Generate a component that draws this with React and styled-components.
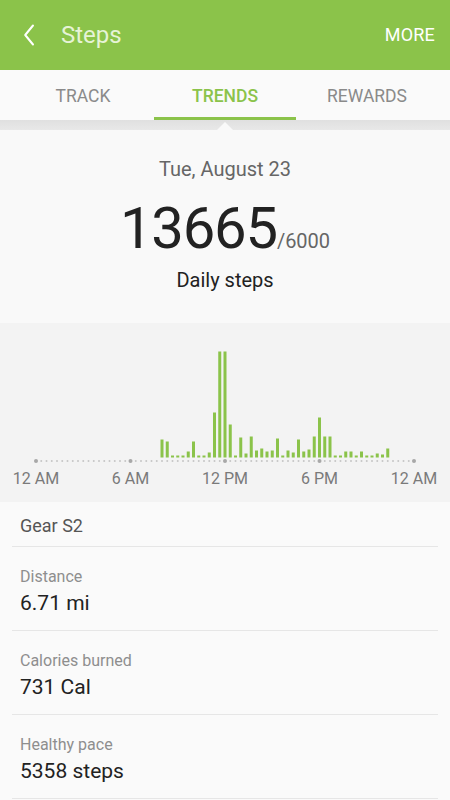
import React from "react";
import styled, { createGlobalStyle } from "styled-components";

const GREEN = "#8bc34a";

const GlobalStyle = createGlobalStyle`
  html, body { margin: 0; padding: 0; }
  body {
    background: #fafafa;
    font-family: Roboto, "Noto Sans", "Liberation Sans", sans-serif;
    overflow: hidden;
    width: 450px;
  }
  * { box-sizing: border-box; }
`;

const Page = styled.div`
  width: 450px;
  min-height: 800px;
  background: #fafafa;
  display: flex;
  flex-direction: column;
`;

const Header = styled.header`
  height: 70px;
  background: ${GREEN};
  display: flex;
  align-items: center;
  padding: 0 15px 0 23px;
`;

const BackButton = styled.button`
  background: none;
  border: 0;
  padding: 0;
  width: 12px;
  height: 22px;
  display: flex;
  cursor: pointer;
`;

const Title = styled.h1`
  margin: 0 0 0 26px;
  font-size: 24px;
  line-height: 28px;
  font-weight: 400;
  color: #e6f3d6;
  flex: 1;
`;

const More = styled.span`
  font-size: 18px;
  line-height: 22px;
  color: #ffffff;
  letter-spacing: 0.2px;
`;

const Tabs = styled.nav`
  display: grid;
  grid-template-columns: repeat(3, 142px);
  padding: 0 12px;
  background: #fafafa;
  height: 50px;
`;

const Tab = styled.div`
  padding-top: 16px;
  text-align: center;
  font-size: 17.5px;
  line-height: 20px;
  font-weight: ${(p) => (p.$active ? 500 : 400)};
  color: ${(p) => (p.$active ? GREEN : "#8a8a8a")};
  border-bottom: 3px solid ${(p) => (p.$active ? GREEN : "transparent")};
`;

const Band = styled.div`
  position: relative;
  height: 10px;
  background: linear-gradient(#e0e0e0, #e8e8e8);
  &::after {
    content: "";
    position: absolute;
    left: 50%;
    bottom: 0;
    margin-left: -8px;
    border-left: 8px solid transparent;
    border-right: 8px solid transparent;
    border-bottom: 8px solid #f9f9f9;
  }
`;

const Summary = styled.section`
  background: #f9f9f9;
  display: flex;
  flex-direction: column;
  align-items: center;
  padding: 27px 0 31px;
`;

const DateText = styled.div`
  font-size: 20px;
  line-height: 24px;
  color: #666;
`;

const Count = styled.div`
  margin-top: 15px;
  font-size: 58px;
  line-height: 64px;
  height: 64px;
  color: #222;
  letter-spacing: -1.2px;
`;

const Goal = styled.span`
  font-size: 20px;
  line-height: 20px;
  color: #666;
  letter-spacing: 0;
`;

const CountLabel = styled.div`
  margin-top: 8px;
  font-size: 20px;
  line-height: 24px;
  color: #222;
`;

const ChartPanel = styled.section`
  background: #f3f3f3;
  height: 179px;
  display: flex;
`;

const List = styled.section`
  background: #fafafa;
  padding: 0 12px;
  display: flex;
  flex-direction: column;
`;

const Device = styled.div`
  padding: 13px 8px 10px;
  font-size: 18px;
  line-height: 21px;
  color: #555;
  border-bottom: 1px solid #e6e6e6;
`;

const Stat = styled.div`
  padding: 20px 8px 14px;
  display: flex;
  flex-direction: column;
  gap: 3px;
  border-bottom: 1px solid #e6e6e6;
`;

const StatLabel = styled.div`
  font-size: 16px;
  line-height: 20px;
  color: #8e8e8e;
`;

const StatValue = styled.div`
  font-size: 21px;
  line-height: 26px;
  color: #222;
`;

const heights = {
  24: 18, 25: 16, 26: 2, 27: 2, 28: 2, 29: 6, 30: 16, 31: 2, 32: 2, 33: 5,
  34: 45, 35: 106, 36: 106, 37: 33, 38: 2, 39: 20, 40: 4, 41: 21, 42: 7,
  43: 9, 44: 6, 45: 7, 46: 19, 47: 2, 48: 7, 49: 5, 50: 18, 51: 6, 52: 8,
  53: 21, 54: 40, 55: 21, 56: 21, 57: 2, 58: 2, 59: 6, 60: 6, 61: 2, 62: 6,
  63: 2, 64: 2, 65: 4, 66: 3, 67: 9,
};

const X0 = 36;
const STEP = 5.25;
const BASE = 134.5;
const DOT_Y = 138;

function StepChart() {
  const dots = [];
  for (let i = 0; i <= 72; i++) {
    const major = i % 18 === 0;
    dots.push(
      <circle
        key={i}
        cx={X0 + i * STEP}
        cy={DOT_Y}
        r={major ? 2 : 1}
        fill={major ? "#a8a8a8" : "#c6c6c6"}
      />
    );
  }
  const bars = Object.entries(heights).map(([slot, h]) => (
    <rect
      key={slot}
      x={X0 + Number(slot) * STEP - 1.5}
      y={BASE - h}
      width={3}
      height={h}
      fill={GREEN}
    />
  ));
  const labels = ["12 AM", "6 AM", "12 PM", "6 PM", "12 AM"];
  return (
    <svg width="450" height="179" viewBox="0 0 450 179">
      {dots}
      {bars}
      {labels.map((l, i) => (
        <text
          key={i}
          x={X0 + i * 18 * STEP}
          y={160.5}
          textAnchor="middle"
          fontFamily="Roboto, sans-serif"
          fontSize="16"
          fill="#7a7a7a"
        >
          {l}
        </text>
      ))}
    </svg>
  );
}

export default function App() {
  return (
    <Page>
      <GlobalStyle />
      <Header>
        <BackButton aria-label="Back">
          <svg width="12" height="22" viewBox="0 0 12 22">
            <path d="M10 1.5 L2.2 11 L10 20.5" fill="none" stroke="#fff" strokeWidth="2" strokeLinecap="round" strokeLinejoin="round" />
          </svg>
        </BackButton>
        <Title>Steps</Title>
        <More>MORE</More>
      </Header>
      <Tabs>
        <Tab>TRACK</Tab>
        <Tab $active>TRENDS</Tab>
        <Tab>REWARDS</Tab>
      </Tabs>
      <Band />
      <Summary>
        <DateText>Tue, August 23</DateText>
        <Count>
          13665<Goal>/6000</Goal>
        </Count>
        <CountLabel>Daily steps</CountLabel>
      </Summary>
      <ChartPanel>
        <StepChart />
      </ChartPanel>
      <List>
        <Device>Gear S2</Device>
        <Stat>
          <StatLabel>Distance</StatLabel>
          <StatValue>6.71 mi</StatValue>
        </Stat>
        <Stat>
          <StatLabel>Calories burned</StatLabel>
          <StatValue>731 Cal</StatValue>
        </Stat>
        <Stat>
          <StatLabel>Healthy pace</StatLabel>
          <StatValue>5358 steps</StatValue>
        </Stat>
      </List>
    </Page>
  );
}
